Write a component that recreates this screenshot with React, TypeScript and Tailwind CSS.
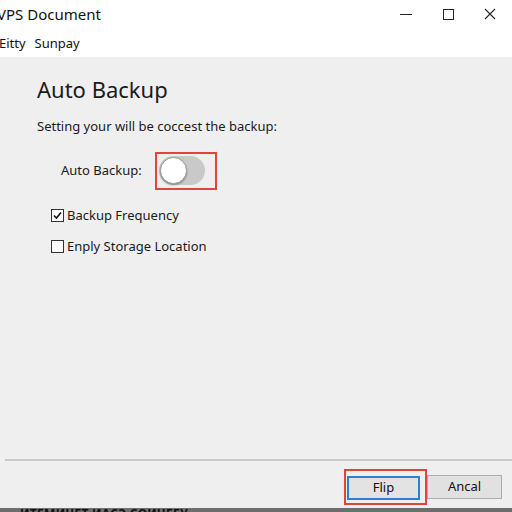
import React, { useState } from 'react';

const font = { fontFamily: '"Noto Sans", "Open Sans", sans-serif' };

const TitleBar: React.FC = () => (
  <div className="flex h-[28px] items-center bg-white">
    <span className="-ml-[3px] text-[15px] text-[#111]">VPS Document</span>
    <div className="ml-auto flex h-full items-center pr-[1px]">
      <div className="flex h-full w-[43px] items-center justify-center">
        <div className="h-px w-[12px] bg-[#222]" />
      </div>
      <div className="flex h-full w-[42px] items-center justify-center">
        <div className="h-[11px] w-[11px] border border-[#222]" />
      </div>
      <div className="flex h-full w-[42px] items-center justify-center">
        <svg width="12" height="12" viewBox="0 0 12 12">
          <path d="M1 1 L11 11 M11 1 L1 11" stroke="#222" strokeWidth="1.1" />
        </svg>
      </div>
    </div>
  </div>
);

const Toggle: React.FC<{ on: boolean; onChange: () => void }> = ({ on, onChange }) => (
  <div className="border-2 border-[#e0443a] pt-[2px] pb-[3px] pl-[2px] pr-[10px]">
    <button
      onClick={onChange}
      className={`flex h-[29px] w-[46px] items-center rounded-full px-[1px] ${on ? 'justify-end bg-[#3a86d8]' : 'justify-start bg-[#c9c9c9]'}`}
    >
      <span className="h-[27px] w-[27px] rounded-full border border-[#9a9a9a] bg-white shadow-[0_1px_2px_rgba(0,0,0,0.35)]" />
    </button>
  </div>
);

const Check: React.FC<{ checked: boolean; label: string; onToggle: () => void }> = ({ checked, label, onToggle }) => (
  <label className="flex items-center gap-[3px] text-[13px] text-[#1a1a1a]" onClick={onToggle}>
    <span className="flex h-[13px] w-[13px] items-center justify-center border border-[#333] bg-white">
      {checked && (
        <svg width="11" height="11" viewBox="0 0 11 11">
          <path d="M2 5.5 L4.5 8 L9 2.5" stroke="#111" strokeWidth="1.6" fill="none" />
        </svg>
      )}
    </span>
    {label}
  </label>
);

export default function App() {
  const [auto, setAuto] = useState(false);
  const [freq, setFreq] = useState(true);
  const [loc, setLoc] = useState(false);

  return (
    <div className="flex h-[512px] w-[512px] flex-col overflow-hidden bg-[#efefef]" style={font}>
      <TitleBar />
      <div className="flex h-[29px] items-center gap-[9px] bg-white pt-[2px] text-[13px] text-[#111]">
        <span className="-ml-[1px]">Eitty</span>
        <span>Sunpay</span>
      </div>

      <div className="flex flex-1 flex-col px-[37px]">
        <h1 className="mt-[17px] text-[22px] leading-[30px] text-[#1a1a1a]">Auto Backup</h1>
        <p className="mt-[13px] text-[13px] text-[#1a1a1a]">Setting your will be coccest the backup:</p>

        <div className="mt-[15px] flex items-center gap-[13px] pl-[24px]">
          <span className="text-[13px] text-[#1a1a1a]">Auto Backup:</span>
          <Toggle on={auto} onChange={() => setAuto(!auto)} />
        </div>

        <div className="mt-[16px] flex flex-col gap-[12px] pl-[14px]">
          <Check checked={freq} label="Backup Frequency" onToggle={() => setFreq(!freq)} />
          <Check checked={loc} label="Enply Storage Location" onToggle={() => setLoc(!loc)} />
        </div>
      </div>

      <div className="ml-[5px] h-[2px] bg-[#c8c8c8]" />

      <div className="flex h-[47px] items-center justify-end pt-[5px] pr-[10px]">
        <div className="border-2 border-[#e0443a] px-[1px] py-[3px] pr-[5px]">
          <button className="h-[24px] w-[73px] border-2 border-[#2f7fd0] bg-[#e3e3e3] text-[13px] text-[#111]">Flip</button>
        </div>
        <button className="h-[24px] w-[75px] border border-[#adadad] bg-[#e1e1e1] text-[13px] text-[#111]">Ancal</button>
      </div>

      <div className="h-[4px] overflow-hidden bg-[#6e6e6e]">
        <span className="ml-[20px] block text-[12px] font-bold leading-[12px] tracking-wide text-[#111]">ИТЕМИЧЕТ ИАСЭ СОИЧЕЕУ</span>
      </div>
    </div>
  );
}
